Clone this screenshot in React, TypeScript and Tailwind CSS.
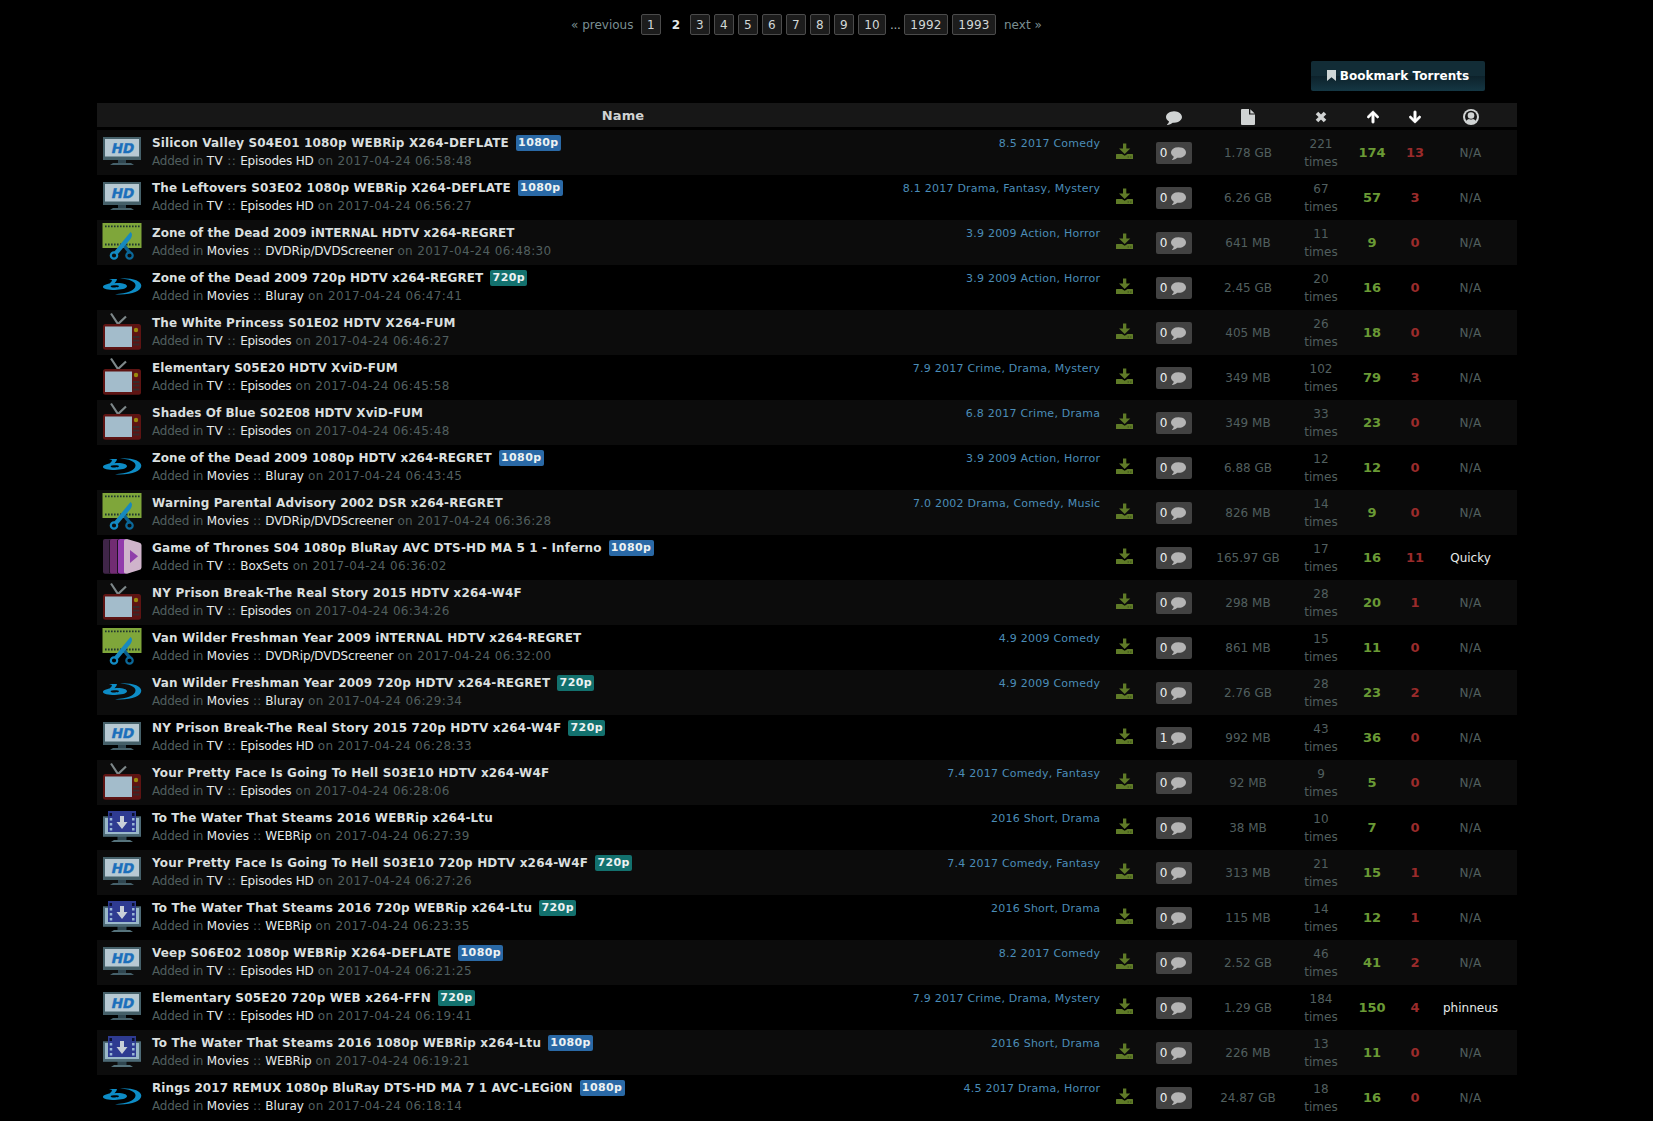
import React from "react";
import { FaArrowUp, FaArrowDown } from "react-icons/fa";

type Kind = "hd" | "dvd" | "blu" | "tv" | "box" | "web";
type Row = {
  k: Kind;
  title: string;
  /** letter spacing of the title, in px */
  ls: number;
  q?: "1080p" | "720p";
  time: string;
  genre?: string;
  comments?: number;
  size: string;
  times: number;
  up: number;
  down: number;
  user?: string;
};

const CATEGORY: Record<Kind, { group: string; name: string; nameClass: string }> = {
  hd: { group: "TV", name: "Episodes HD", nameClass: "tracking-[-0.19px]" },
  dvd: { group: "Movies", name: "DVDRip/DVDScreener", nameClass: "tracking-[-0.11px]" },
  blu: { group: "Movies", name: "Bluray", nameClass: "" },
  tv: { group: "TV", name: "Episodes", nameClass: "tracking-[-0.28px]" },
  box: { group: "TV", name: "BoxSets", nameClass: "" },
  web: { group: "Movies", name: "WEBRip", nameClass: "tracking-[-0.15px]" },
};

const ROWS: Row[] = [
  { k: "hd", ls: 0.157, title: "Silicon Valley S04E01 1080p WEBRip X264-DEFLATE", q: "1080p", time: "06:58:48", genre: "8.5 2017 Comedy", size: "1.78 GB", times: 221, up: 174, down: 13 },
  { k: "hd", ls: 0.137, title: "The Leftovers S03E02 1080p WEBRip X264-DEFLATE", q: "1080p", time: "06:56:27", genre: "8.1 2017 Drama, Fantasy, Mystery", size: "6.26 GB", times: 67, up: 57, down: 3 },
  { k: "dvd", ls: 0.01, title: "Zone of the Dead 2009 iNTERNAL HDTV x264-REGRET", time: "06:48:30", genre: "3.9 2009 Action, Horror", size: "641 MB", times: 11, up: 9, down: 0 },
  { k: "blu", ls: 0.06, title: "Zone of the Dead 2009 720p HDTV x264-REGRET", q: "720p", time: "06:47:41", genre: "3.9 2009 Action, Horror", size: "2.45 GB", times: 20, up: 16, down: 0 },
  { k: "tv", ls: 0.11, title: "The White Princess S01E02 HDTV X264-FUM", time: "06:46:27", size: "405 MB", times: 26, up: 18, down: 0 },
  { k: "tv", ls: 0.07, title: "Elementary S05E20 HDTV XviD-FUM", time: "06:45:58", genre: "7.9 2017 Crime, Drama, Mystery", size: "349 MB", times: 102, up: 79, down: 3 },
  { k: "tv", ls: 0.045, title: "Shades Of Blue S02E08 HDTV XviD-FUM", time: "06:45:48", genre: "6.8 2017 Crime, Drama", size: "349 MB", times: 33, up: 23, down: 0 },
  { k: "blu", ls: 0.06, title: "Zone of the Dead 2009 1080p HDTV x264-REGRET", q: "1080p", time: "06:43:45", genre: "3.9 2009 Action, Horror", size: "6.88 GB", times: 12, up: 12, down: 0 },
  { k: "dvd", ls: 0.115, title: "Warning Parental Advisory 2002 DSR x264-REGRET", time: "06:36:28", genre: "7.0 2002 Drama, Comedy, Music", size: "826 MB", times: 14, up: 9, down: 0 },
  { k: "box", ls: 0.14, title: "Game of Thrones S04 1080p BluRay AVC DTS-HD MA 5 1 - Inferno", q: "1080p", time: "06:36:02", size: "165.97 GB", times: 17, up: 16, down: 11, user: "Quicky" },
  { k: "tv", ls: 0.16, title: "NY Prison Break-The Real Story 2015 HDTV x264-W4F", time: "06:34:26", size: "298 MB", times: 28, up: 20, down: 1 },
  { k: "dvd", ls: 0.115, title: "Van Wilder Freshman Year 2009 iNTERNAL HDTV x264-REGRET", time: "06:32:00", genre: "4.9 2009 Comedy", size: "861 MB", times: 15, up: 11, down: 0 },
  { k: "blu", ls: 0.165, title: "Van Wilder Freshman Year 2009 720p HDTV x264-REGRET", q: "720p", time: "06:29:34", genre: "4.9 2009 Comedy", size: "2.76 GB", times: 28, up: 23, down: 2 },
  { k: "hd", ls: 0.176, title: "NY Prison Break-The Real Story 2015 720p HDTV x264-W4F", q: "720p", time: "06:28:33", comments: 1, size: "992 MB", times: 43, up: 36, down: 0 },
  { k: "tv", ls: 0.176, title: "Your Pretty Face Is Going To Hell S03E10 HDTV x264-W4F", time: "06:28:06", genre: "7.4 2017 Comedy, Fantasy", size: "92 MB", times: 9, up: 5, down: 0 },
  { k: "web", ls: 0.105, title: "To The Water That Steams 2016 WEBRip x264-Ltu", time: "06:27:39", genre: "2016 Short, Drama", size: "38 MB", times: 10, up: 7, down: 0 },
  { k: "hd", ls: 0.178, title: "Your Pretty Face Is Going To Hell S03E10 720p HDTV x264-W4F", q: "720p", time: "06:27:26", genre: "7.4 2017 Comedy, Fantasy", size: "313 MB", times: 21, up: 15, down: 1 },
  { k: "web", ls: 0.126, title: "To The Water That Steams 2016 720p WEBRip x264-Ltu", q: "720p", time: "06:23:35", genre: "2016 Short, Drama", size: "115 MB", times: 14, up: 12, down: 1 },
  { k: "hd", ls: 0.17, title: "Veep S06E02 1080p WEBRip X264-DEFLATE", q: "1080p", time: "06:21:25", genre: "8.2 2017 Comedy", size: "2.52 GB", times: 46, up: 41, down: 2 },
  { k: "hd", ls: 0.18, title: "Elementary S05E20 720p WEB x264-FFN", q: "720p", time: "06:19:41", genre: "7.9 2017 Crime, Drama, Mystery", size: "1.29 GB", times: 184, up: 150, down: 4, user: "phinneus" },
  { k: "web", ls: 0.134, title: "To The Water That Steams 2016 1080p WEBRip x264-Ltu", q: "1080p", time: "06:19:21", genre: "2016 Short, Drama", size: "226 MB", times: 13, up: 11, down: 0 },
  { k: "blu", ls: 0.098, title: "Rings 2017 REMUX 1080p BluRay DTS-HD MA 7 1 AVC-LEGi0N", q: "1080p", time: "06:18:14", genre: "4.5 2017 Drama, Horror", size: "24.87 GB", times: 18, up: 16, down: 0 },
];

function CategoryIcon({ kind }: { kind: Kind }) {
  return (
    <svg viewBox="0 0 40 40" className="block h-10 w-10 shrink-0">
      {kind === "hd" && (
        <>
          <rect x="16" y="30" width="8" height="4" fill="#2f4650" />
          <path d="M8 35 L11 33 H29 L32 35 Z" fill="#45606a" />
          <rect x="1" y="7" width="38" height="23" fill="#456069" />
          <rect x="3" y="9" width="34" height="17.500" fill="#b7c9d3" />
          <text transform="translate(20 23) skewX(-12)" textAnchor="middle" fill="#1b6fbb" stroke="#1b6fbb" strokeWidth="0.400" fontSize="13.500" fontWeight="700">HD</text>
        </>
      )}
      {kind === "dvd" && (
        <>
          <rect x="0.500" y="3" width="39" height="25" fill="#7fa63a" />
          <path d="M3 6.300 H38 M3 24.500 H38" stroke="#20352f" strokeWidth="1.800" strokeDasharray="1.600 1.400" />
          <path d="M21 24 L28 33" stroke="#0a5f8f" strokeWidth="3.500" />
          <path d="M28.500 12 Q31.500 14 28.500 19 L16 34 L12 32 Z" fill="#1789bf" />
          <circle cx="12" cy="35.500" r="3.200" fill="none" stroke="#128bc4" strokeWidth="2.200" />
          <circle cx="27.500" cy="35.500" r="3.200" fill="none" stroke="#0b6899" strokeWidth="2.200" />
        </>
      )}
      {kind === "blu" && (
        <g fill="#0d8cc6">
          <path d="M7 14 H15 Q14.800 16.500 12.500 18.300 C19 17.600 25 19 25 21.300 C25 23.600 19 24.900 13 24.900 C6 24.900 1 23.800 1 21.900 C1 20.400 4 19.500 7.500 18.600 Q10 16.500 10 15 Z M12 20.300 C9 20.500 8 21.200 9 21.900 C11 22.900 17 22.600 17 21.300 C17 20.300 14.500 20.200 12 20.300 Z" fillRule="evenodd" />
          <path d="M18 13.300 C31 12.800 39.300 16 39.300 20.800 C39.300 26.500 28 30.500 13 29.300 C25 28.300 33.500 25.500 33.500 20.500 C33.500 16.500 27 14.100 18 13.300 Z" />
        </g>
      )}
      {kind === "tv" && (
        <>
          <path d="M9 3.500 L16 14 L24 6.500" fill="none" stroke="#7d8789" strokeWidth="2.200" />
          <rect x="1" y="14" width="38" height="25.700" rx="2.500" fill="#5e1413" />
          <rect x="3" y="16.500" width="27" height="20.500" fill="#a3bccb" />
          <circle cx="34" cy="20" r="2.200" fill="#9a8a0c" />
          <path d="M31 27 H37.500 M31 30.500 H37.500 M31 34.500 H37.500" stroke="#352b2c" strokeWidth="2" />
        </>
      )}
      {kind === "box" && (
        <>
          <rect x="1" y="4" width="10" height="34.700" rx="2" fill="#3f2548" />
          <rect x="8" y="4" width="9" height="34.700" rx="2" fill="#712c72" />
          <rect x="16" y="4" width="9" height="34.700" rx="2" fill="#913bab" />
          <path d="M7.500 5 V38 M15.500 5 V38" stroke="#1e1222" />
          <path d="M22 6 Q22 4 25 4 L37 7.500 Q39.500 8 39.500 10 V32.500 Q39.500 34.500 37 35 L25 38.700 Q22 38.700 22 37 Z" fill="#cfb4cb" />
          <path d="M28 15 L36 21.300 L28 28 Z" fill="#8f3faa" />
        </>
      )}
      {kind === "web" && (
        <>
          <rect x="15.500" y="31" width="9" height="4" fill="#2f4650" />
          <path d="M9 37 L12 35 H28 L31 37 Z" fill="#56737c" />
          <rect x="1" y="11.300" width="38" height="20.500" fill="#4d6a76" />
          <rect x="3" y="13" width="34" height="16" fill="#9ab8c8" />
          <rect x="6" y="6" width="28" height="21" fill="#2e3b91" />
          <path d="M7.500 8 H10 V11 H7.500 Z M30 8 H32.500 V11 H30 Z" fill="#0b1030" />
          <path d="M9 13 V26 M31.300 13 V26" stroke="#9ab8d8" strokeWidth="2.500" strokeDasharray="2.500 2.500" />
          <path d="M18 11 H22 V17 H25.500 L20 24 L14.500 17 H18 Z" fill="#c8cfd8" />
        </>
      )}
    </svg>
  );
}

function CommentIcon({ className }: { className: string }) {
  return (
    <svg viewBox="0 0 1792 1792" className={className} fill="currentColor">
      <path d="M1792 896q0 174-120 321.500t-326 233-450 85.500q-70 0-145-8-198 175-460 242-49 14-114 22-17 2-30.500-9t-17.500-29v-1q-3-4-.5-12t2-10 4.500-9.500l6-9 7-8.500 8-9q7-8 31-34.500t34.500-38 31-39.500 32.500-51 27-59 26-76q-157-89-247.500-220t-90.500-281q0-130 71-248.500t191-204.500 286-136.500 348-50.500q244 0 450 85.500t326 233 120 321.500z" />
    </svg>
  );
}

function FileIcon() {
  return (
    <svg viewBox="0 0 14 16" className="mt-1 h-4 w-[14px]" fill="#d0d3d3">
      <path d="M1 0 H8 V5.500 H14 V15 Q14 16 13 16 H1 Q0 16 0 15 V1 Q0 0 1 0 Z" />
      <path d="M9.300 0.300 L13.700 4.500 H9.300 Z" />
    </svg>
  );
}

function CrossIcon() {
  return (
    <svg viewBox="0 0 12 12" className="mt-1 h-3 w-3">
      <path d="M2 2 L10 10 M10 2 L2 10" stroke="#d0d3d3" strokeWidth="3.600" />
    </svg>
  );
}

function UserIcon() {
  return (
    <svg viewBox="0 0 16 16" className="mt-[3px] h-4 w-4">
      <circle cx="8" cy="8" r="8" fill="#d0d3d3" />
      <circle cx="8" cy="7.800" r="6" fill="#171717" />
      <circle cx="8" cy="6.500" r="3.300" fill="#d0d3d3" />
      <path d="M3 12.500 Q4 10 6 10 Q8 11.200 10 10 Q12 10 13 12.500 Q8 17 3 12.500 Z" fill="#d0d3d3" />
    </svg>
  );
}

function BookmarkIcon() {
  return (
    <svg viewBox="0 0 9 11" className="mr-px h-[11px] w-[9px]" fill="#cfd6d6">
      <path d="M0 0 H9 V11 L4.500 7.200 L0 11 Z" />
    </svg>
  );
}

function DownloadIcon() {
  return (
    <svg viewBox="0 0 17 17" className="block h-[17px] w-[17px]">
      <path d="M7 0.500 H10.300 V5.500 H14.300 L8.700 11 L3 5.500 H7 Z" fill="#5f7b27" />
      <path d="M0.500 11 H6 L8.700 12.800 L11.500 11 H16.500 L17 11.500 V16 H0 V11.500 Z" fill="#5f7b27" />
      <path d="M11.500 14 H13 M14 14 H15.500" stroke="#3a4c18" />
    </svg>
  );
}

const GRID = "grid grid-cols-[1052px_49px_100px_46px_56px_30px_81px] pr-[6px]";

const PAGES = ["1", "2", "3", "4", "5", "6", "7", "8", "9", "10", "...", "1992", "1993"];

function pageWidth(label: string) {
  return label.length === 1 ? "w-5" : label.length === 2 ? "w-7" : "w-11";
}

export default function App() {
  return (
    <div className="h-[1121px] overflow-hidden bg-black text-[13px] leading-[18px] text-[#515f5f] [font-family:'DejaVu_Sans',Verdana,sans-serif]">
      <nav className="flex h-[49px] items-center pl-[571px] text-[12px] text-[#7a8f92]">
        <span className="w-[70px]">« previous</span>
        {PAGES.map((p) =>
          p === "2" ? (
            <b key={p} className="mr-[3px] w-[22px] text-center text-[#e4e8e8]">2</b>
          ) : p === "..." ? (
            <span key={p} className="w-[14px] tracking-[-0.3px] text-[#aab4b4]">...</span>
          ) : (
            <span key={p} className={`mr-1 flex h-[21px] items-center justify-center rounded-[2px] border border-[#4b4b4b] bg-[#1c1c1c] tracking-[0.2px] text-[#d2d8d8] ${pageWidth(p)}`}>{p}</span>
          ),
        )}
        <span className="ml-1">next »</span>
      </nav>
      <div className="flex h-[54px] justify-end pt-3 pr-[168px]">
        <button className="flex h-[30px] w-[174px] items-center justify-center gap-[3px] rounded-[2px] bg-linear-to-b from-[#122c36] from-50% via-[#0d222b] via-50% to-[#153744] pb-px text-[12px] font-bold text-white">
          <BookmarkIcon />
          <span className="tracking-[0.06px]">Bookmark Torrents</span>
        </button>
      </div>
      <main className="ml-[97px] w-[1420px]">
        <div className={`${GRID} mb-[3px] h-6 items-center justify-items-center bg-[#171717] text-[#d0d3d3]`}>
          <b className="pt-px tracking-[0.15px]">Name</b>
          <CommentIcon className="mt-1 h-4 w-4" />
          <FileIcon />
          <CrossIcon />
          <FaArrowUp className="mt-1 ml-px h-[14px] w-3 stroke-white stroke-[30px] text-white" />
          <FaArrowDown className="mt-1 h-[14px] w-3 stroke-white stroke-[30px] text-white" />
          <UserIcon />
        </div>
        {ROWS.map((r, i) => (
          <div key={i} className={`${GRID} h-[45px] items-center justify-items-center odd:bg-black even:bg-[#0c0c0c]`}>
            <div className="flex h-full w-full items-start">
              <span className="ml-[5px] w-[50px]"><CategoryIcon kind={r.k} /></span>
              <div className="mt-1 grow whitespace-nowrap">
                <div className="flex h-[18px] items-center">
                  <b className="text-[12px] text-[#d9dfdf]" style={{ letterSpacing: `${r.ls}px` }}>{r.title}</b>
                  {r.q && (
                    <b className={`ml-[7px] h-4 rounded-[2px] text-center text-[11px] leading-4 tracking-[0.4px] text-[#eef2f2] ${r.q === "1080p" ? "w-[45px] bg-[#2a69a6]" : "w-[37px] bg-[#13716e]"}`}>{r.q}</b>
                  )}
                </div>
                <div className="text-[12px]">
                  <span className="tracking-[-0.22px]">Added in </span>
                  <span className={CATEGORY[r.k].group === "TV" ? "tracking-[0.35px]" : "tracking-[0.1px]"}>
                    <span className="text-[#e6eaea]">{CATEGORY[r.k].group}</span>
                    {" :: "}
                  </span>
                  <span className={`text-[#e6eaea] ${CATEGORY[r.k].nameClass}`}>{CATEGORY[r.k].name}</span>
                  <span className="tracking-[0.36px]"> on 2017-04-24 {r.time}</span>
                </div>
              </div>
              <div className="mt-[5px] mr-[15.750px] whitespace-nowrap text-[11px] tracking-[0.24px] text-[#4b8db8]">{r.genre}</div>
              <span className="mt-[13px] mr-4"><DownloadIcon /></span>
            </div>
            <span className="flex h-[22px] w-9 items-center justify-center gap-1 rounded-[2px] bg-[#424242] pr-px text-[12px] text-[#eef2f2]">
              {r.comments ?? 0}
              <CommentIcon className="h-[15px] w-[15px] text-[#b5b5b5]" />
            </span>
            <span className="text-[12px]">{r.size}</span>
            <span className="text-center text-[12px]">{r.times}<br />times</span>
            <b className="text-[#6a9a35]">{r.up}</b>
            <b className="text-[#9a2b2b]">{r.down}</b>
            <span className={`text-[12px] ${r.user ? "text-[#e6eaea]" : "tracking-[0.3px]"}`}>{r.user ?? "N/A"}</span>
          </div>
        ))}
      </main>
    </div>
  );
}
